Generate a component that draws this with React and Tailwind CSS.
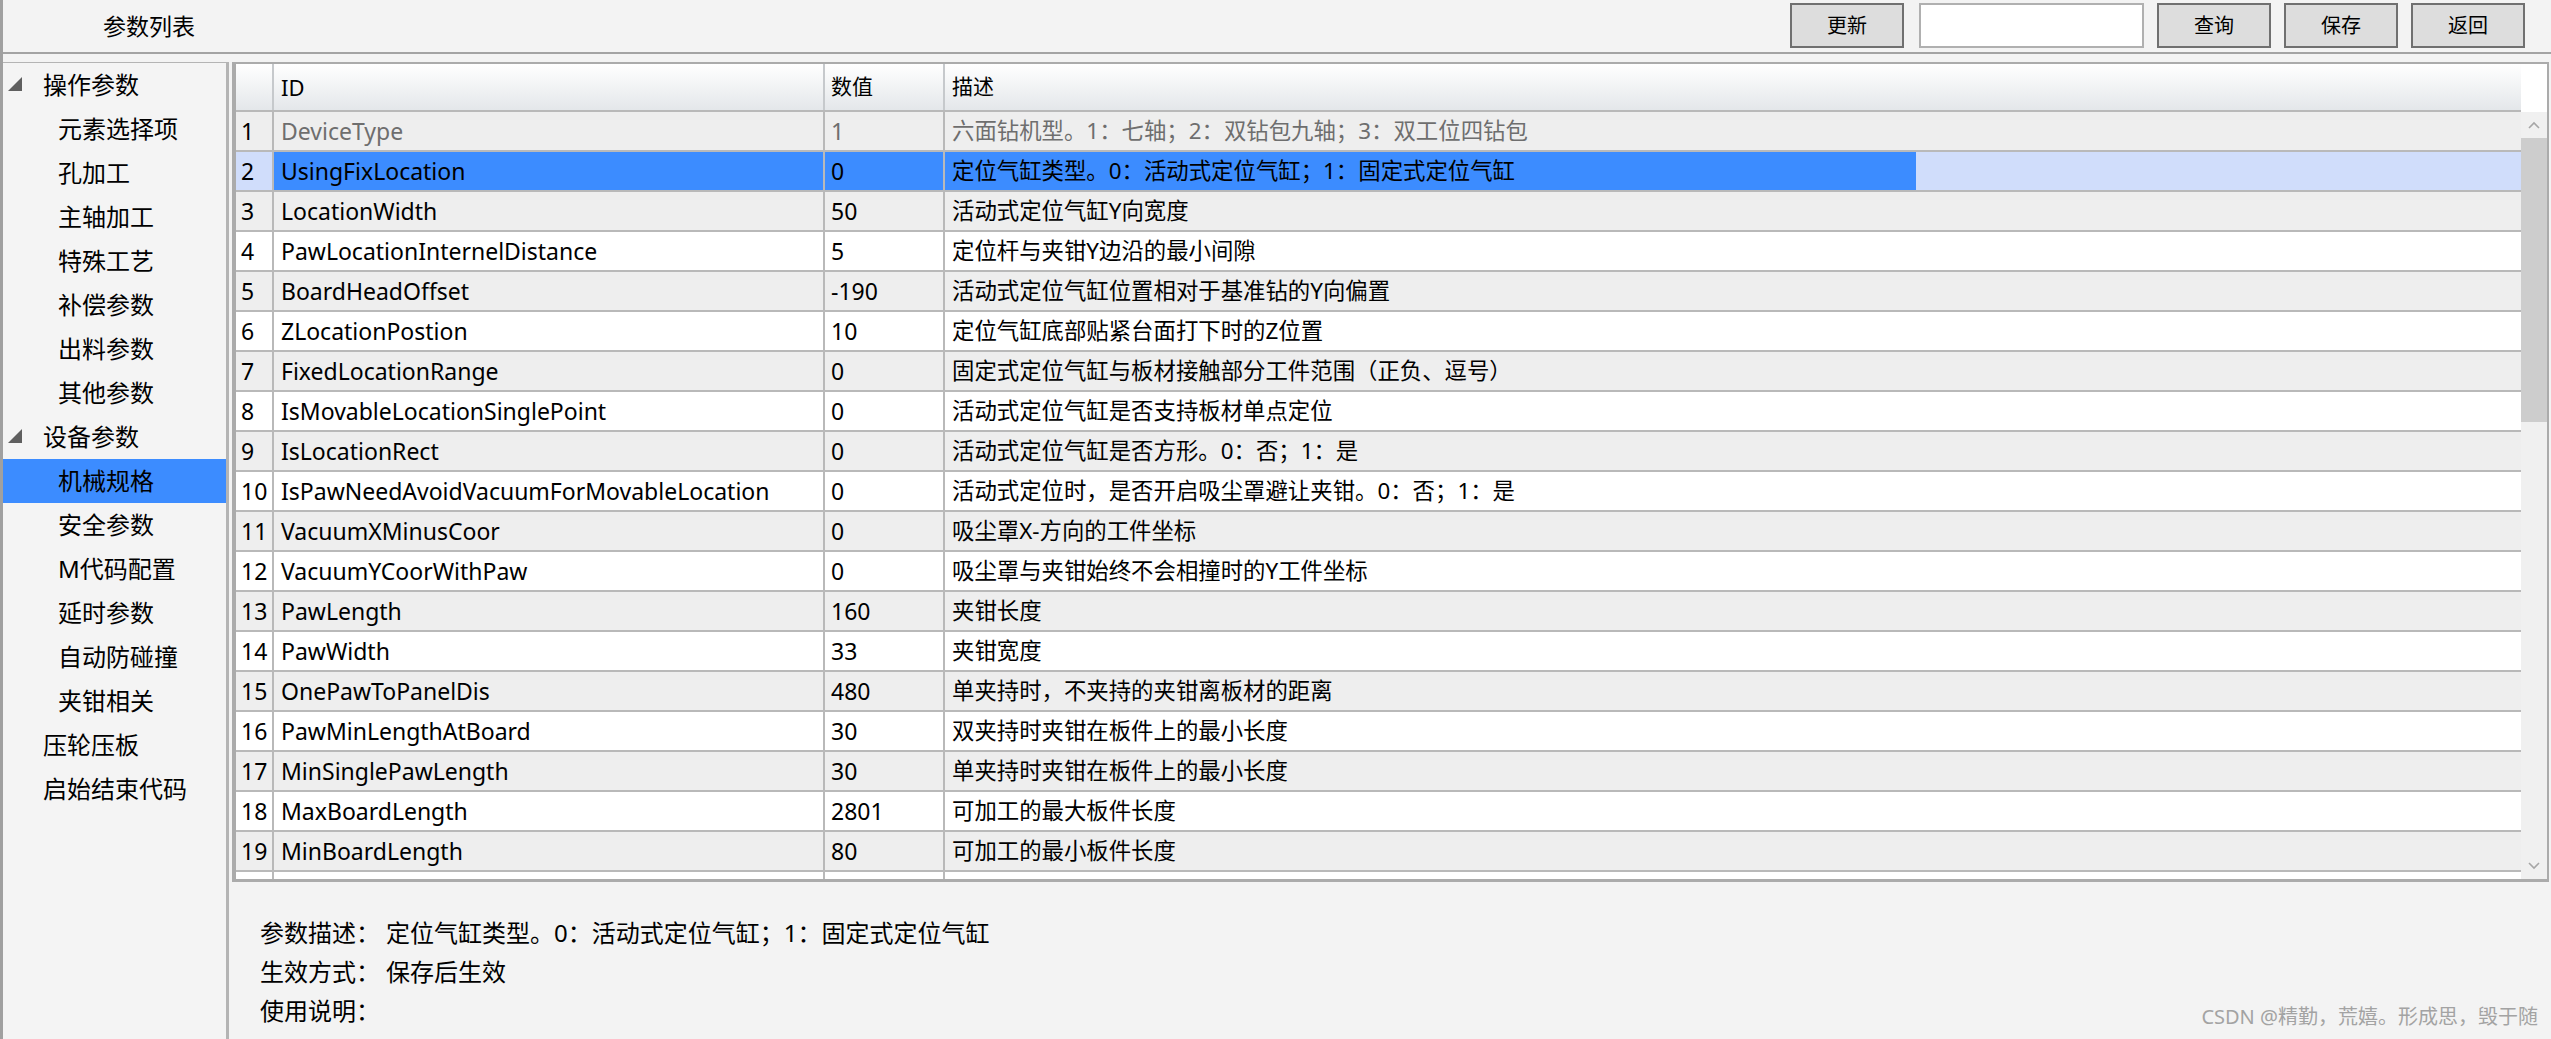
import React from 'react'

const navItems = [
  { t: '操作参数', top: true, open: true },
  { t: '元素选择项' },
  { t: '孔加工' },
  { t: '主轴加工' },
  { t: '特殊工艺' },
  { t: '补偿参数' },
  { t: '出料参数' },
  { t: '其他参数' },
  { t: '设备参数', top: true, open: true },
  { t: '机械规格', active: true },
  { t: '安全参数' },
  { t: 'M代码配置' },
  { t: '延时参数' },
  { t: '自动防碰撞' },
  { t: '夹钳相关' },
  { t: '压轮压板', top: true },
  { t: '启始结束代码', top: true },
]

const rows = [
  ['DeviceType', '1', '六面钻机型。1：七轴；2：双钻包九轴；3：双工位四钻包'],
  ['UsingFixLocation', '0', '定位气缸类型。0：活动式定位气缸；1：固定式定位气缸'],
  ['LocationWidth', '50', '活动式定位气缸Y向宽度'],
  ['PawLocationInternelDistance', '5', '定位杆与夹钳Y边沿的最小间隙'],
  ['BoardHeadOffset', '-190', '活动式定位气缸位置相对于基准钻的Y向偏置'],
  ['ZLocationPostion', '10', '定位气缸底部贴紧台面打下时的Z位置'],
  ['FixedLocationRange', '0', '固定式定位气缸与板材接触部分工件范围（正负、逗号）'],
  ['IsMovableLocationSinglePoint', '0', '活动式定位气缸是否支持板材单点定位'],
  ['IsLocationRect', '0', '活动式定位气缸是否方形。0：否；1：是'],
  ['IsPawNeedAvoidVacuumForMovableLocation', '0', '活动式定位时，是否开启吸尘罩避让夹钳。0：否；1：是'],
  ['VacuumXMinusCoor', '0', '吸尘罩X-方向的工件坐标'],
  ['VacuumYCoorWithPaw', '0', '吸尘罩与夹钳始终不会相撞时的Y工件坐标'],
  ['PawLength', '160', '夹钳长度'],
  ['PawWidth', '33', '夹钳宽度'],
  ['OnePawToPanelDis', '480', '单夹持时，不夹持的夹钳离板材的距离'],
  ['PawMinLengthAtBoard', '30', '双夹持时夹钳在板件上的最小长度'],
  ['MinSinglePawLength', '30', '单夹持时夹钳在板件上的最小长度'],
  ['MaxBoardLength', '2801', '可加工的最大板件长度'],
  ['MinBoardLength', '80', '可加工的最小板件长度'],
]

const Btn = ({ children }) => (
  <button className='w-[114px] h-[45px] border-2 border-[#707070] bg-[#dddddd] text-[20px] leading-none'>{children}</button>
)

const Sidebar = () => (
  <div className='w-[226px] shrink-0 border-t border-r-[3px] border-[#b4b4b4] bg-[#f4f4f4]'>
    {navItems.map((it) => (
      <div
        key={it.t}
        className={`relative flex h-[44px] items-center text-[24px] ${it.top ? 'pl-[40px]' : 'pl-[55px]'} ${it.active ? 'bg-[#3c8cff]' : ''}`}
      >
        {it.open && (
          <svg className='absolute left-[4px] top-[13px]' width='16' height='16' viewBox='0 0 16 16'>
            <polygon points='15,1 15,15 1,15' fill='#5f5f5f' />
          </svg>
        )}
        {it.t}
      </div>
    ))}
  </div>
)

const Chevron = ({ up }) => (
  <svg width='14' height='10' viewBox='0 0 14 10'>
    <polyline points={up ? '2,8 7,3 12,8' : '2,2 7,7 12,2'} fill='none' stroke='#a6a6a6' strokeWidth='1.6' />
  </svg>
)

const Grid = () => (
  <div className='ml-[3px] mr-[2px] h-[820px] flex border-l-[4px] border-t-2 border-b-[3px] border-r-2 border-[#ababab] bg-white overflow-hidden'>
    <div className='flex-1 flex flex-col overflow-hidden'>
      <div className='flex h-[48px] shrink-0 border-b-2 border-[#b9b9b9] bg-linear-to-b from-white to-[#e4e7ea] text-[21px]'>
        <div className='w-[38px] border-r-2 border-[#c6c9cc]' />
        <div className='w-[551px] flex items-center pl-[7px] border-r-2 border-[#c6c9cc] text-[22px]'>ID</div>
        <div className='w-[120px] flex items-center pl-[6px] border-r-2 border-[#c6c9cc]'>数值</div>
        <div className='flex-1 flex items-center pl-[7px]'>描述</div>
      </div>
      {rows.map((r, i) => {
        const sel = i === 1
        const gray = i === 0
        const bg = i % 2 === 0 ? 'bg-[#eeeeee]' : 'bg-white'
        return (
          <div key={r[0]} className={`flex h-[40px] shrink-0 border-b-2 border-[#b9b9b9] text-[23px] ${sel ? 'bg-[#d0ddfb]' : bg}`}>
            <div className='w-[38px] flex items-center pl-[5px] border-r-2 border-[#b9b9b9]'>{i + 1}</div>
            <div className={`w-[551px] flex items-center pl-[7px] border-r-2 border-[#b9b9b9] ${sel ? 'bg-[#3c8cff]' : ''} ${gray ? 'text-[#6e6e6e]' : ''}`}>{r[0]}</div>
            <div className={`w-[120px] flex items-center pl-[6px] border-r-2 border-[#b9b9b9] ${sel ? 'bg-[#3c8cff]' : ''} ${gray ? 'text-[#6e6e6e]' : ''}`}>{r[1]}</div>
            <div className={`w-[971px] flex items-center pl-[7px] whitespace-nowrap text-[22.4px] ${sel ? 'bg-[#3c8cff]' : ''} ${gray ? 'text-[#6e6e6e]' : ''}`}>{r[2]}</div>
            <div className='flex-1' />
          </div>
        )
      })}
      <div className='flex h-[40px] shrink-0 bg-white'>
        <div className='w-[38px] border-r-2 border-[#b9b9b9]' />
        <div className='w-[551px] border-r-2 border-[#b9b9b9]' />
        <div className='w-[120px] border-r-2 border-[#b9b9b9]' />
      </div>
    </div>
    <div className='w-[26px] shrink-0 flex flex-col'>
      <div className='h-[48px] bg-white' />
      <div className='h-[26px] bg-[#f0f0f0] flex items-center justify-center'><Chevron up /></div>
      <div className='h-[284px] bg-[#cdcdcd]' />
      <div className='flex-1 bg-[#f0f0f0]' />
      <div className='h-[26px] bg-[#f0f0f0] flex items-center justify-center'><Chevron /></div>
    </div>
  </div>
)

export default function App() {
  return (
    <div className="relative w-[2551px] h-[1039px] overflow-hidden bg-[#f3f3f3] border-l-[3px] border-[#a0a0a0] text-black font-['Noto_Sans','Noto_Sans_CJK_SC',sans-serif]">
      <header className='h-[54px] flex items-start border-b-2 border-[#a3a3a3]'>
        <div className='pl-[100px] h-[52px] flex items-center text-[23px]'>参数列表</div>
        <div className='ml-auto flex pt-[3px] pr-[26px] gap-[13px]'>
          <Btn>更新</Btn>
          <input className='ml-[2px] w-[225px] h-[45px] border-2 border-[#b0b0b0] bg-white outline-none' />
          <Btn>查询</Btn>
          <Btn>保存</Btn>
          <Btn>返回</Btn>
        </div>
      </header>
      <div className='mt-[8px] flex h-[977px]'>
        <Sidebar />
        <div className='flex-1 flex flex-col'>
          <Grid />
          <div className='pl-[31px] pt-[31px] text-[24px] leading-[39px]'>
            <div className='flex'><span className='w-[126px]'>参数描述：</span><span>定位气缸类型。0：活动式定位气缸；1：固定式定位气缸</span></div>
            <div className='flex'><span className='w-[126px]'>生效方式：</span><span>保存后生效</span></div>
            <div className='flex'><span className='w-[126px]'>使用说明：</span></div>
          </div>
        </div>
      </div>
      <div className='absolute right-[13px] bottom-[7px] text-[20px] text-[#a3a3a3]'>CSDN @精勤，荒嬉。形成思，毁于随</div>
    </div>
  )
}
